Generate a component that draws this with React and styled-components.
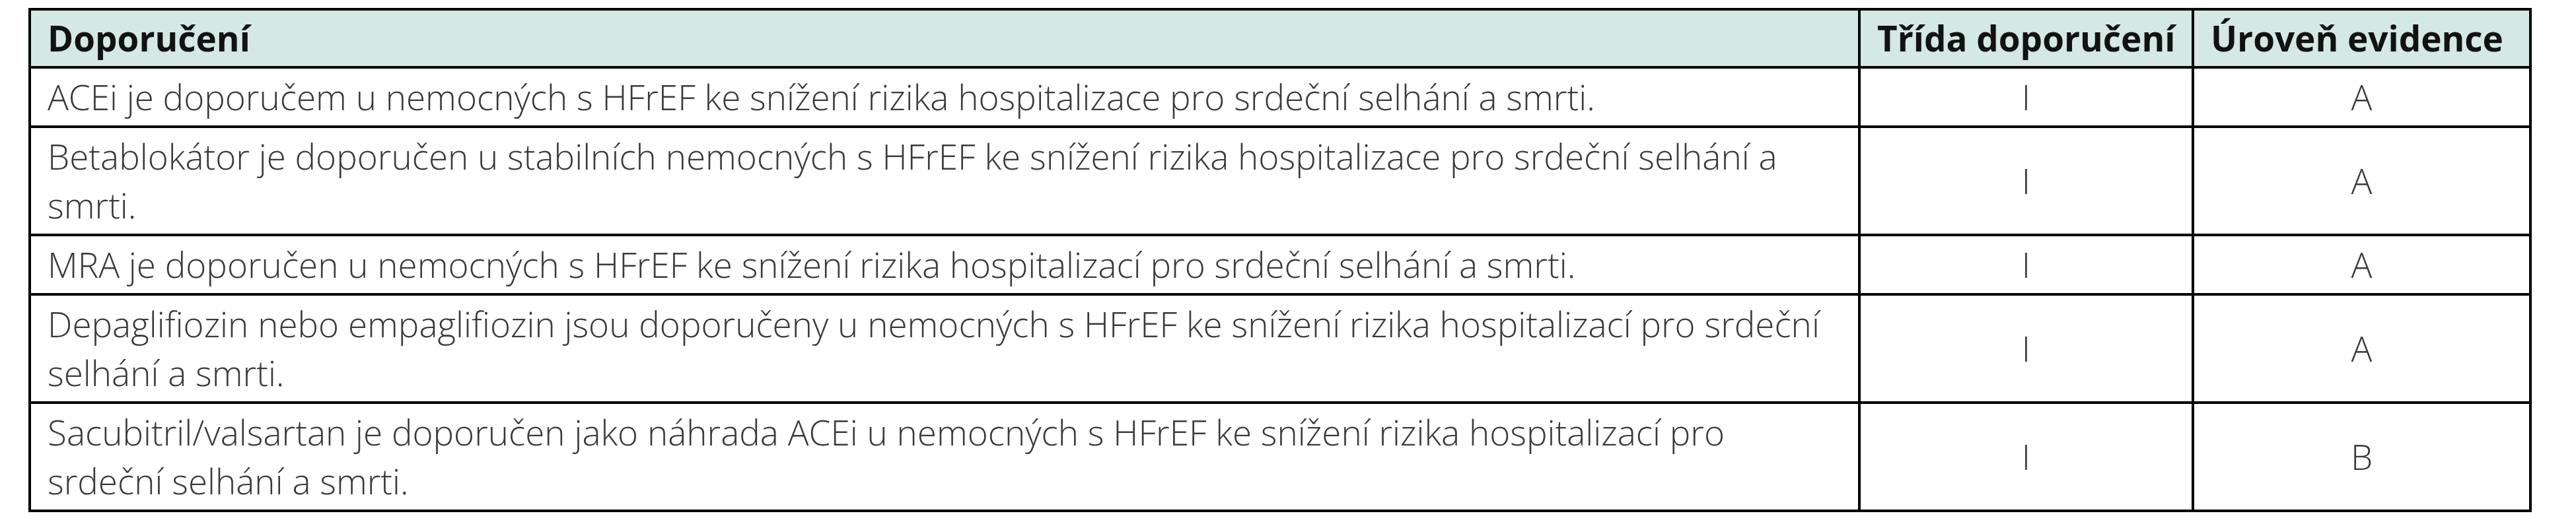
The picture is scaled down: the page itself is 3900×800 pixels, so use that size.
import styled, { createGlobalStyle } from "styled-components";

const Global = createGlobalStyle`
  body { margin: 0; background: #fff; }
`;

const Page = styled.div`
  padding: 12px 0 0 43px;
  font-family: "Open Sans", "Liberation Sans", sans-serif;
`;

const Table = styled.table`
  width: 3786px;
  table-layout: fixed;
  border-collapse: collapse;
  border: 4px solid #000;
`;

const HeadCell = styled.th`
  background: #d4e8e4;
  color: #121212;
  font-weight: 700;
  font-size: 53px;
  line-height: 74px;
  text-align: left;
  padding: 5px 25px;
  border: 4px solid #000;
  white-space: nowrap;
`;

const Cell = styled.td`
  color: #3a3a3a;
  font-weight: 300;
  font-size: 53px;
  line-height: 74px;
  text-align: ${(p) => (p.$center ? "center" : "left")};
  padding: 6px 25px;
  border: 4px solid #000;
  vertical-align: middle;
`;

const rows = [
  {
    text: ["ACEi je doporučem u nemocných s HFrEF ke snížení rizika hospitalizace pro srdeční selhání a smrti."],
    cls: "I",
    lvl: "A",
  },
  {
    text: [
      "Betablokátor je doporučen u stabilních nemocných s HFrEF ke snížení rizika hospitalizace pro srdeční selhání a",
      "smrti.",
    ],
    cls: "I",
    lvl: "A",
  },
  {
    text: ["MRA je doporučen u nemocných s HFrEF ke snížení rizika hospitalizací pro srdeční selhání a smrti."],
    cls: "I",
    lvl: "A",
  },
  {
    text: [
      "Depaglifiozin nebo empaglifiozin jsou doporučeny u nemocných s HFrEF ke snížení rizika hospitalizací pro srdeční",
      "selhání a smrti.",
    ],
    cls: "I",
    lvl: "A",
  },
  {
    text: [
      "Sacubitril/valsartan je doporučen jako náhrada ACEi u nemocných s HFrEF ke snížení rizika hospitalizací pro",
      "srdeční selhání a smrti.",
    ],
    cls: "I",
    lvl: "B",
  },
];

export default function App() {
  return (
    <Page>
      <Global />
      <Table>
        <colgroup>
          <col style={{ width: 2770 }} />
          <col style={{ width: 505 }} />
          <col style={{ width: 511 }} />
        </colgroup>
        <thead>
          <tr>
            <HeadCell>Doporučení</HeadCell>
            <HeadCell>Třída doporučení</HeadCell>
            <HeadCell>Úroveň evidence</HeadCell>
          </tr>
        </thead>
        <tbody>
          {rows.map((r, i) => (
            <tr key={i}>
              <Cell>
                {r.text.map((t, j) => (
                  <span key={j}>
                    {j > 0 && <br />}
                    {t}
                  </span>
                ))}
              </Cell>
              <Cell $center>{r.cls}</Cell>
              <Cell $center>{r.lvl}</Cell>
            </tr>
          ))}
        </tbody>
      </Table>
    </Page>
  );
}
